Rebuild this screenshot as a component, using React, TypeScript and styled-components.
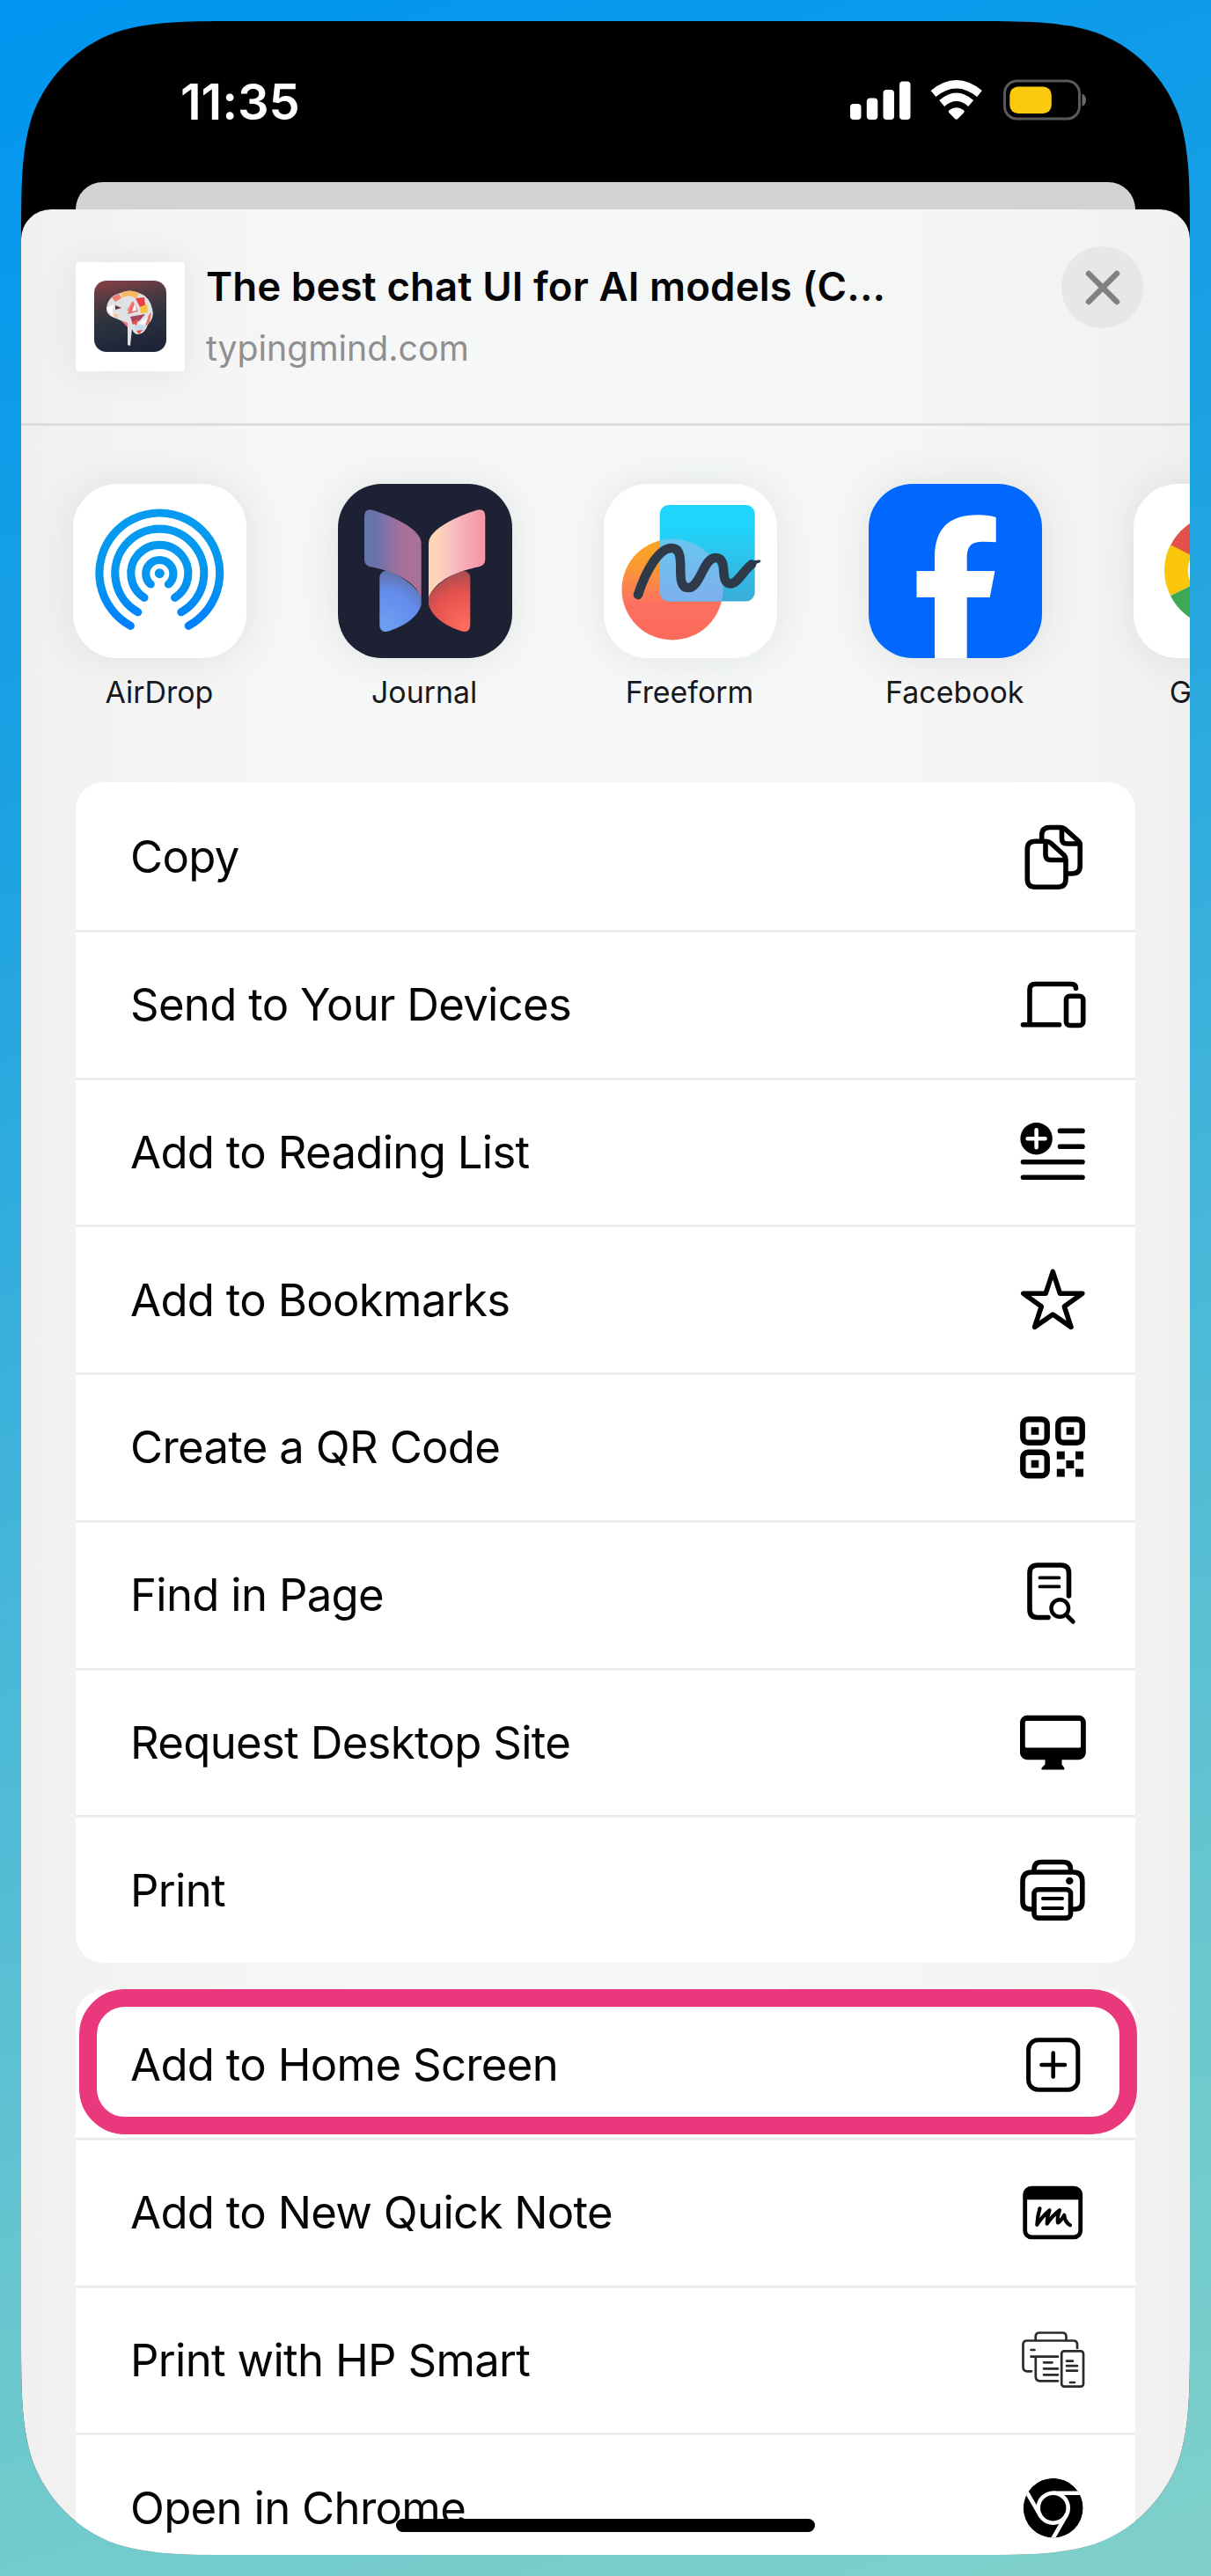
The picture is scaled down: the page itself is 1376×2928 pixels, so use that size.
import React from "react";
import styled, { createGlobalStyle } from "styled-components";

const GlobalStyle = createGlobalStyle`
  html, body { margin: 0; padding: 0; }
  body {
    font-family: Inter, "Liberation Sans", sans-serif;
    color: #050507;
    -webkit-font-smoothing: antialiased;
  }
`;

/* ---------- shell ---------- */

const Backdrop = styled.main`
  box-sizing: border-box;
  width: 1376px;
  height: 2928px;
  padding: 24px;
  background: linear-gradient(162deg, #0095f0 0%, #1da2e2 28%, #43b5da 52%, #6bc8ce 80%, #80d0ca 100%);
  overflow: hidden;
`;

/* Continuous-curvature corner outline of the handset. */
const phoneOutline = (w: number, h: number, r: number) => {
  const a = 1.528665 * r, b = 1.088493 * r, c = 0.868407 * r, d = 0.631494 * r;
  const e = 0.372824 * r, f = 0.16906 * r, g = 0.074911 * r;
  return (
    `M${a} 0 H${w - a} C${w - b} 0 ${w - c} 0 ${w - d} ${g} C${w - e} ${f} ${w - f} ${e} ${w - g} ${d} C${w} ${c} ${w} ${b} ${w} ${a} ` +
    `V${h - a} C${w} ${h - b} ${w} ${h - c} ${w - g} ${h - d} C${w - f} ${h - e} ${w - e} ${h - f} ${w - d} ${h - g} C${w - c} ${h} ${w - b} ${h} ${w - a} ${h} ` +
    `H${a} C${b} ${h} ${c} ${h} ${d} ${h - g} C${e} ${h - f} ${f} ${h - e} ${g} ${h - d} C0 ${h - c} 0 ${h - b} 0 ${h - a} ` +
    `V${a} C0 ${b} 0 ${c} ${g} ${d} C${f} ${e} ${e} ${f} ${d} ${g} C${c} 0 ${b} 0 ${a} 0 Z`
  );
};

const Phone = styled.div`
  position: relative;
  display: flex;
  flex-direction: column;
  width: 1328px;
  height: 2880px;
  background: #000;
  overflow: hidden;
  clip-path: path("${phoneOutline(1328, 2880, 170)}");
`;

const StatusBar = styled.header`
  box-sizing: border-box;
  flex: none;
  display: flex;
  align-items: center;
  justify-content: space-between;
  height: 183px;
  padding: 0 118px 0 181px;
`;

const Clock = styled.time`
  font-size: 56px;
  font-weight: 600;
  letter-spacing: -0.1px;
  color: #fff;
`;

const StatusIcons = styled.svg`
  display: block;
  width: 274px;
  height: 50px;
  margin-bottom: 6px;
`;

const SheetBehind = styled.div`
  flex: none;
  height: 31px;
  margin: 0 62px;
  border-radius: 31px 31px 0 0;
  background: #d2d4d1;
`;

const Sheet = styled.section`
  flex: 1;
  min-height: 0;
  overflow: hidden;
  border-radius: 34px 34px 0 0;
  background: linear-gradient(90deg, #f0f0f1 0%, #f3f3f2 8%, #f6f8f7 32%, #f6f8f8 60%, #f3f3f2 92%, #f0f0f1 100%);
`;

/* ---------- sheet header ---------- */

const SheetHeader = styled.div`
  box-sizing: border-box;
  display: flex;
  align-items: flex-start;
  height: 246px;
  padding: 42px 53px 0 62px;
  border-bottom: 3px solid #dcdede;
`;

const SiteThumb = styled.div`
  display: flex;
  align-items: center;
  justify-content: center;
  width: 124px;
  height: 124px;
  margin-top: 18px;
  border-radius: 3px;
  background: #fff;
  box-shadow: 0 0 40px rgba(60, 70, 70, 0.09);
`;

const SiteText = styled.div`
  flex: 1;
  margin: 18px 0 0 24px;
`;

const SiteTitle = styled.h1`
  margin: 0;
  font-size: 45.6px;
  line-height: 56px;
  font-weight: 600;
  letter-spacing: 0.1px;
  white-space: nowrap;
`;

const SiteHost = styled.p`
  margin: 17px 0 0;
  font-size: 39.2px;
  line-height: 50px;
  color: #8f8f91;
`;

const CloseButton = styled.button`
  display: flex;
  align-items: center;
  justify-content: center;
  width: 93px;
  height: 93px;
  padding: 0;
  border: 0;
  border-radius: 50%;
  background: #e6e7e9;
`;

/* ---------- app row ---------- */

const AppRow = styled.div`
  box-sizing: border-box;
  display: flex;
  gap: 104px;
  height: 405px;
  padding: 66px 0 0 59.2px;
`;

const AppItem = styled.div`
  flex: none;
  display: flex;
  flex-direction: column;
  align-items: center;
  width: 197.3px;
`;

const AppTile = styled.div<{ $fill: string }>`
  width: 197.3px;
  height: 197.5px;
  overflow: hidden;
  border-radius: 50px;
  background: ${(p) => p.$fill};
  box-shadow: 0 0 44px rgba(50, 60, 60, 0.1);
  svg { display: block; }
`;

const AppName = styled.span`
  margin: 18px 2px 0 0;
  font-size: 33.9px;
  line-height: 42px;
  color: #17181c;
  white-space: nowrap;
`;

/* ---------- action lists ---------- */

const ActionList = styled.ul`
  list-style: none;
  margin: 0 62px 31px;
  padding: 0;
  border-radius: 32px;
  background: #fff;
`;

const ActionRow = styled.li`
  position: relative;
  box-sizing: border-box;
  display: flex;
  align-items: center;
  justify-content: space-between;
  height: 167.75px;
  padding: 0 54px 0 62px;
  & + & { box-shadow: inset 0 2.5px #e9eaea; }
`;

const ActionLabel = styled.span`
  padding-top: 3px;
  font-size: 50.8px;
  line-height: 64px;
  letter-spacing: -0.67px;
  white-space: nowrap;
`;

const Glyph = styled.svg`
  display: block;
  width: 80px;
  height: 88px;
  fill: none;
  stroke: #000;
  stroke-width: 5.6;
  stroke-linecap: round;
  stroke-linejoin: round;
`;

const HighlightRing = styled.div`
  position: absolute;
  left: 4px;
  right: -2px;
  top: -1.5px;
  bottom: 4px;
  border: 20.5px solid #e9387c;
  border-radius: 52px;
`;

const HomeIndicator = styled.div`
  position: absolute;
  left: 426px;
  bottom: 26px;
  width: 476px;
  height: 15px;
  border-radius: 8px;
  background: #000;
`;

/* ---------- row glyphs ---------- */

const CopyGlyph = () => (
  <Glyph viewBox="0 0 80 88">
    <path d="M27.7 24V20.5q0-9 9-9H49q3 0 5.4 2L69 26.5q2.2 2 2.2 5V55q0 9-9 9H57" />
    <path d="M50.5 12V24q0 6 6 6H71" />
    <path d="M32 27.3H20.3q-9 0-9 9V70.2q0 9 9 9H46q9 0 9-9V48q0-3-2.2-5.2L38 29.3q-2.4-2-6-2z" />
    <path d="M32 28V42.5q0 6 6 6H54.5" />
  </Glyph>
);

const DevicesGlyph = () => (
  <Glyph viewBox="0 0 80 88">
    <path d="M14 66V28q0-6.500 6.500-6.500H61q5.500 0 5.500 4.800" />
    <path d="M6.500 67.800H47.500" />
    <rect x="55.500" y="35.300" width="19.200" height="33.200" rx="4" />
  </Glyph>
);

const ReadingListGlyph = () => (
  <Glyph viewBox="0 0 80 88">
    <circle cx="21.600" cy="30.200" r="18.200" fill="#000" stroke="none" />
    <path d="M21.600 20.200V40.200M11.600 30.200H31.600" stroke="#fff" strokeWidth="4.500" />
    <path d="M48.500 21.400H74M48.500 39.200H74M6.500 56.700H74M6.500 74.300H74" />
  </Glyph>
);

const StarGlyph = () => (
  <Glyph viewBox="0 0 80 88">
    <path d="M40.300 13.500L48.400 38.200H73.800L53.300 53L61 76.400L40.300 62L19.600 76.400L27.300 53L6.800 38.200H32.200Z" />
  </Glyph>
);

const QrGlyph = () => (
  <Glyph viewBox="0 0 80 88">
    {[[6.3, 13.3], [46.3, 13.3], [6.3, 50.8]].map(([x, y]) => (
      <g key={`${x}-${y}`}>
        <rect x={x} y={y} width="27.400" height="26.400" rx="6" strokeWidth="6.400" />
        <rect x={x + 9.4} y={y + 8.9} width="8.600" height="8.600" fill="#000" stroke="none" />
      </g>
    ))}
    <g fill="#000" stroke="none">
      <rect x="44.800" y="49.700" width="9" height="9" />
      <rect x="66" y="49.700" width="9" height="9" />
      <rect x="55.400" y="60" width="9" height="9" />
      <rect x="44.800" y="69.600" width="9" height="9" />
      <rect x="66" y="69.600" width="9" height="9" />
    </g>
  </Glyph>
);

const FindGlyph = () => (
  <Glyph viewBox="0 0 80 88">
    <path d="M58.500 46V20q0-9-9-9H23q-9 0-9 9V61.500q0 9 9 9H35" />
    <path d="M25.500 25.300H47.500M25.500 35.400H47.500" strokeWidth="3.800" />
    <circle cx="48.300" cy="60" r="9.800" strokeWidth="4.400" />
    <path d="M55.700 67.800L63.200 75.300" strokeWidth="5" />
  </Glyph>
);

const DesktopGlyph = () => (
  <Glyph viewBox="0 0 80 88">
    <rect x="3" y="14.800" width="74.800" height="50.400" rx="8" fill="#000" stroke="none" />
    <rect x="8.800" y="21" width="63.200" height="30.400" rx="1.500" fill="#fff" stroke="none" />
    <path d="M31.500 64H50.500V70.500L53.300 74.500V76.400H27.500V74.500L31.500 70.500Z" fill="#000" stroke="none" />
  </Glyph>
);

const PrintGlyph = () => (
  <Glyph viewBox="0 0 80 88">
    <path d="M19 24.500V22q0-8.500 8.500-8.500H52q8.500 0 8.500 8.500V24.500" />
    <path d="M18.500 67H14.500q-8.500 0-8.500-8.500V35.500q0-10.500 10.500-10.500H63.300q10.500 0 10.500 10.500V58.500q0 8.500-8.500 8.500H61" />
    <rect x="19" y="44.800" width="41.500" height="32.300" rx="4.500" />
    <path d="M29 55.100H51M29 66H51" strokeWidth="4" />
    <circle cx="59.300" cy="34.900" r="4.200" fill="#000" stroke="none" />
  </Glyph>
);

const PlusSquareGlyph = () => (
  <Glyph viewBox="0 0 80 88">
    <rect x="12.600" y="16.800" width="56.200" height="56.400" rx="11" strokeWidth="5" />
    <path d="M40.700 31.500V58.500M27.500 45H54" strokeWidth="4.600" />
  </Glyph>
);

const QuickNoteGlyph = () => (
  <Glyph viewBox="0 0 80 88">
    <rect x="8.700" y="17.100" width="63" height="55.800" rx="7.500" strokeWidth="4.800" />
    <path d="M8 30.200V24q0-8 8-8H64q8 0 8 8V30.200Z" fill="#000" stroke="none" />
    <path d="M25.500 40.200Q22.600 50 22.300 58.800Q27.500 50 36.500 42.300Q33.600 50 33.700 57.600Q39 49 48 42.200Q45 50 46 56.500Q49 55 53.300 47.800Q53.600 55.500 60 59.200" strokeWidth="4.200" />
  </Glyph>
);

const HpSmartGlyph = () => (
  <Glyph viewBox="0 0 80 88">
    <g stroke="#2b2b2e" strokeWidth="2.700">
      <path d="M68 32V28q0-4.500-4.500-4.500H11q-4.500 0-4.500 4.500V53.500q0 4.800 4.800 4.800H16" />
      <path d="M20.700 23V19q0-4.500 4.500-4.500H51q4.500 0 4.500 4.500V23" />
      <path d="M15.500 34H19.500M15.500 41.700H46M20.800 42V64.500q0 4.800 4.800 4.800H46" />
      <path d="M30 48.300H39.500M30 55.300H46M30 62.300H46" />
      <rect x="50.200" y="35.300" width="24.800" height="40.300" rx="3" />
      <path d="M56 46.700H63M56 52.200H68M56 57.700H68M60 71H65" />
    </g>
  </Glyph>
);

const ChromeGlyph = () => (
  <Glyph viewBox="0 0 80 88">
    <clipPath id="chromeDisc">
      <circle cx="40.700" cy="45.700" r="34" />
    </clipPath>
    <g clipPath="url(#chromeDisc)">
      <circle cx="40.700" cy="45.700" r="34" fill="#000" stroke="none" />
      <g stroke="#fff" strokeWidth="4.600">
        <circle cx="40.700" cy="45.700" r="17" />
        {[0, 120, 240].map((deg) => (
          <path key={deg} d="M40.700 28.700H80" transform={`rotate(${deg} 40.700 45.700)`} />
        ))}
      </g>
    </g>
  </Glyph>
);

/* ---------- app artwork ---------- */

const AirDropArt = () => (
  <svg width="198" height="198" viewBox="0 0 198 198" fill="none">
    <defs>
      <linearGradient id="airdrop" gradientUnits="userSpaceOnUse" x1="0" y1="30" x2="0" y2="168">
        <stop offset="0" stopColor="#069bf0" />
        <stop offset=".55" stopColor="#0596f0" />
        <stop offset="1" stopColor="#007dff" />
      </linearGradient>
    </defs>
    <g stroke="url(#airdrop)" strokeWidth="9.200" strokeLinecap="round">
      <path d="M65.300 161.300A68.400 68.400 0 1 1 131.300 161.300" />
      <path d="M73.700 145.700A50.500 50.500 0 1 1 122.900 145.700" />
      <path d="M81 129.300A32.500 32.500 0 1 1 115.600 129.300" />
      <path d="M88.200 114A15.600 15.600 0 1 1 108.400 114" />
    </g>
    <circle cx="98.300" cy="101.700" r="5.500" fill="#0596f0" />
  </svg>
);

const JournalArt = () => (
  <svg width="198" height="198" viewBox="0 0 198 198">
    <defs>
      <linearGradient id="jUpL"><stop offset=".15" stopColor="#6673ad" /><stop offset=".7" stopColor="#a9709a" /></linearGradient>
      <linearGradient id="jUpR"><stop offset=".15" stopColor="#fed3b6" /><stop offset=".45" stopColor="#f8bcc4" /><stop offset=".9" stopColor="#f698a8" /></linearGradient>
      <radialGradient id="jLoL" gradientUnits="userSpaceOnUse" cx="52" cy="162" r="62">
        <stop offset="0" stopColor="#6fa0f2" /><stop offset=".65" stopColor="#638ced" /><stop offset="1" stopColor="#6272ad" />
      </radialGradient>
      <radialGradient id="jLoR" gradientUnits="userSpaceOnUse" cx="145" cy="162" r="68">
        <stop offset="0" stopColor="#ff6d5e" /><stop offset=".6" stopColor="#e4524e" /><stop offset="1" stopColor="#984a52" />
      </radialGradient>
    </defs>
    <path d="M47.300 106Q48.500 98.500 56 98.500Q84 110 94.700 128V137Q90 156 59 167Q47.300 170.500 47.300 160Z" fill="url(#jLoL)" />
    <path d="M150.300 106Q149 98.500 141 98.500Q113 110 103 128V137Q108 156 139 167Q150.300 170.500 150.300 160Z" fill="url(#jLoR)" />
    <path d="M30 36.500Q30.500 27.500 39.500 29.800C62 37 86 48 93 61Q94.700 64 94.700 68V129C87 112 70 101 36 94Q30 92 30 86Z" fill="url(#jUpL)" />
    <path d="M167.300 36.500Q167 27.500 158 29.800C135 37 112 48 104.700 61Q103 64 103 68V129C110 112 128 101 161 94Q167.300 92 167.300 86Z" fill="url(#jUpR)" />
  </svg>
);

const FreeformArt = () => (
  <svg width="198" height="198" viewBox="0 0 198 198">
    <defs>
      <linearGradient id="ffBall" x1="0" y1="0" x2="0" y2="1">
        <stop offset="0" stopColor="#fba81e" /><stop offset=".3" stopColor="#fb9636" /><stop offset=".65" stopColor="#fd7060" /><stop offset="1" stopColor="#fa6a5a" />
      </linearGradient>
      <linearGradient id="ffPane" x1="0" y1="0" x2="0" y2="1">
        <stop offset=".2" stopColor="#20d5fc" /><stop offset="1" stopColor="#3bacd8" />
      </linearGradient>
      <linearGradient id="ffOver" x1="0" y1="0" x2="0" y2="1">
        <stop offset="0" stopColor="#66c6ee" /><stop offset=".5" stopColor="#7cb3ee" /><stop offset="1" stopColor="#78aeee" />
      </linearGradient>
      <clipPath id="ffClip"><rect x="63.700" y="24" width="108" height="109.500" rx="10" /></clipPath>
    </defs>
    <circle cx="78" cy="120" r="57.500" fill="url(#ffBall)" />
    <rect x="63.700" y="24" width="108" height="109.500" rx="10" fill="url(#ffPane)" />
    <circle cx="78" cy="120" r="57.500" fill="url(#ffOver)" clipPath="url(#ffClip)" />
    <path d="M39 126C48 98 63 73 77 73C97 73 78 118 96 118C110 118 113 84 127 84C143 84 130 113 144 113.500C152 113.500 160 97 168 91.500" fill="none" stroke="#2e3a49" strokeWidth="10.500" strokeLinecap="round" strokeLinejoin="round" />
    <path d="M163 92Q170 86 177.500 86.500Q179.500 88 177 89.500Q172 90.500 168 97Z" fill="#2e3a49" />
  </svg>
);

const FacebookArt = () => (
  <svg width="198" height="198" viewBox="0 0 198 198">
    <path d="M75 198V129H54.500V99H75V84C75 50 92 35.300 124 35.300Q137 35.300 144.700 38V66.300Q138 65.700 131 65.700C116 65.700 111.700 70 111.700 86V99H143.500L137.700 129H111.700V198Z" fill="#fff" />
  </svg>
);

const GoogleArt = () => (
  <svg width="198" height="198" viewBox="0 0 198 198" fill="none" strokeWidth="27">
    <path d="M54 76A50.500 50.500 0 0 1 134 62" stroke="#e2524b" />
    <path d="M54 121.200A50.500 50.500 0 0 1 54 75.400" stroke="#fac70c" />
    <path d="M134 135A50.500 50.500 0 0 1 54 121.200" stroke="#3ea955" />
    <path d="M99 98H149.500A50.500 50.500 0 0 1 134 135" stroke="#4285f4" />
  </svg>
);

const BrainArt = () => (
  <svg width="82" height="82" viewBox="0 0 82 82">
    <defs>
      <linearGradient id="brainBg" x1=".35" y1="0" x2=".55" y2="1">
        <stop offset="0" stopColor="#7d3f44" /><stop offset=".25" stopColor="#4e3a42" /><stop offset=".55" stopColor="#2b333f" /><stop offset="1" stopColor="#1e2338" />
      </linearGradient>
    </defs>
    <rect x="0" y="0" width="82" height="81" rx="14" fill="url(#brainBg)" />
    <path d="M14 31Q16 17 30 14Q40 9 51 14Q63 18 66 32Q69 42 61 50Q58 60 50 61Q45 61 43 55L41 74L38 73V51Q32 45 22 42Q13 38 14 31Z" fill="#dfe1e3" />
    <path d="M30 14Q40 9 51 14L48 20L40 17L31 19Z" fill="#f9b85f" />
    <path d="M20 19L28 15L31 20L24 24Z" fill="#ee7a72" />
    <path d="M14 31L22 27L21 36L29 41L20 40Z" fill="#fff" />
    <path d="M24 28L31 31L24 33Z" fill="#6c2f41" />
    <path d="M37 34L43 24L46 35Z" fill="#f58a86" />
    <path d="M47 20L57 19L58 28L52 30Z" fill="#ea3f46" />
    <path d="M44 23L50 35L38 38Z" fill="#ef6a6a" />
    <path d="M52 30L60 27L61 36L53 37Z" fill="#fac23a" />
    <path d="M46 26L48 34L43 35Z" fill="#fff" />
    <path d="M20 37L28 39L25 43Z" fill="#f9bf8e" />
    <path d="M41 41L58 38L52 45L44 50Z" fill="#a3445f" />
    <path d="M43 47L50 43L48 51Z" fill="#e84a45" />
    <path d="M30 45L38 48V53Z" fill="#e9777a" />
    <path d="M62 39L65 36L63 47L58 52Z" fill="#ee6f68" />
    <path d="M51 48L61 41L56 53Z" fill="#f5f7f8" />
    <path d="M44 52L56 50L57 57L49 58Z" fill="#c4dcee" />
    <path d="M48 57L55 56L51 61Z" fill="#ea4f48" />
  </svg>
);

/* ---------- data ---------- */

const apps = [
  { name: "AirDrop", fill: "#fff", Art: AirDropArt },
  { name: "Journal", fill: "#1e2034", Art: JournalArt },
  { name: "Freeform", fill: "#fff", Art: FreeformArt },
  { name: "Facebook", fill: "#0067ff", Art: FacebookArt },
  { name: "Google", fill: "#fff", Art: GoogleArt },
];

type Action = { label: string; Icon: React.FC; highlighted?: boolean };

const pageActions: Action[] = [
  { label: "Copy", Icon: CopyGlyph },
  { label: "Send to Your Devices", Icon: DevicesGlyph },
  { label: "Add to Reading List", Icon: ReadingListGlyph },
  { label: "Add to Bookmarks", Icon: StarGlyph },
  { label: "Create a QR Code", Icon: QrGlyph },
  { label: "Find in Page", Icon: FindGlyph },
  { label: "Request Desktop Site", Icon: DesktopGlyph },
  { label: "Print", Icon: PrintGlyph },
];

const moreActions: Action[] = [
  { label: "Add to Home Screen", Icon: PlusSquareGlyph, highlighted: true },
  { label: "Add to New Quick Note", Icon: QuickNoteGlyph },
  { label: "Print with HP Smart", Icon: HpSmartGlyph },
  { label: "Open in Chrome", Icon: ChromeGlyph },
];

const Actions = ({ items }: { items: Action[] }) => (
  <ActionList>
    {items.map(({ label, Icon, highlighted }) => (
      <ActionRow key={label}>
        <ActionLabel>{label}</ActionLabel>
        <Icon />
        {highlighted && <HighlightRing />}
      </ActionRow>
    ))}
  </ActionList>
);

export default function App() {
  return (
    <>
      <GlobalStyle />
      <Backdrop>
        <Phone>
          <StatusBar>
            <Clock>11:35</Clock>
            <StatusIcons viewBox="0 0 274 50" fill="none">
              <g fill="#fff">
                <rect x="6" y="30" width="12.500" height="18" rx="4" />
                <rect x="24.800" y="23.500" width="12.500" height="24.500" rx="4" />
                <rect x="43.500" y="14" width="12.500" height="34" rx="4" />
                <rect x="62" y="4.500" width="12.500" height="43.500" rx="4" />
                <path d="M126.700 47.700Q125.700 47.700 124.800 46.800L118.200 40Q117 38.500 118.500 37.300Q126.700 31 135 37.300Q136.400 38.500 135.200 40L128.600 46.800Q127.700 47.700 126.700 47.700Z" />
              </g>
              <path d="M100.500 18.500Q126.700-3 153 18.500" stroke="#fff" strokeWidth="9" />
              <path d="M110.200 29.500Q126.700 15 143.200 29.500" stroke="#fff" strokeWidth="9" />
              <rect x="181.500" y="4" width="85" height="43" rx="14" stroke="#59595c" strokeWidth="3" />
              <rect x="187.300" y="10.500" width="47.500" height="30.500" rx="9.500" fill="#fbc90d" />
              <path d="M269.500 18.500Q274 20.500 274 25.700Q274 31 269.500 33Z" fill="#6a6a6d" />
            </StatusIcons>
          </StatusBar>
          <SheetBehind />
          <Sheet>
            <SheetHeader>
              <SiteThumb>
                <BrainArt />
              </SiteThumb>
              <SiteText>
                <SiteTitle>The best chat UI for AI models (C...</SiteTitle>
                <SiteHost>typingmind.com</SiteHost>
              </SiteText>
              <CloseButton aria-label="Close">
                <svg width="46" height="46" viewBox="0 0 46 46" fill="none" stroke="#808083" strokeWidth="6.500" strokeLinecap="round">
                  <path d="M7 7L39 39M39 7L7 39" />
                </svg>
              </CloseButton>
            </SheetHeader>
            <AppRow>
              {apps.map(({ name, fill, Art }) => (
                <AppItem key={name}>
                  <AppTile $fill={fill}>
                    <Art />
                  </AppTile>
                  <AppName>{name}</AppName>
                </AppItem>
              ))}
            </AppRow>
            <Actions items={pageActions} />
            <Actions items={moreActions} />
          </Sheet>
          <HomeIndicator />
        </Phone>
      </Backdrop>
    </>
  );
}
